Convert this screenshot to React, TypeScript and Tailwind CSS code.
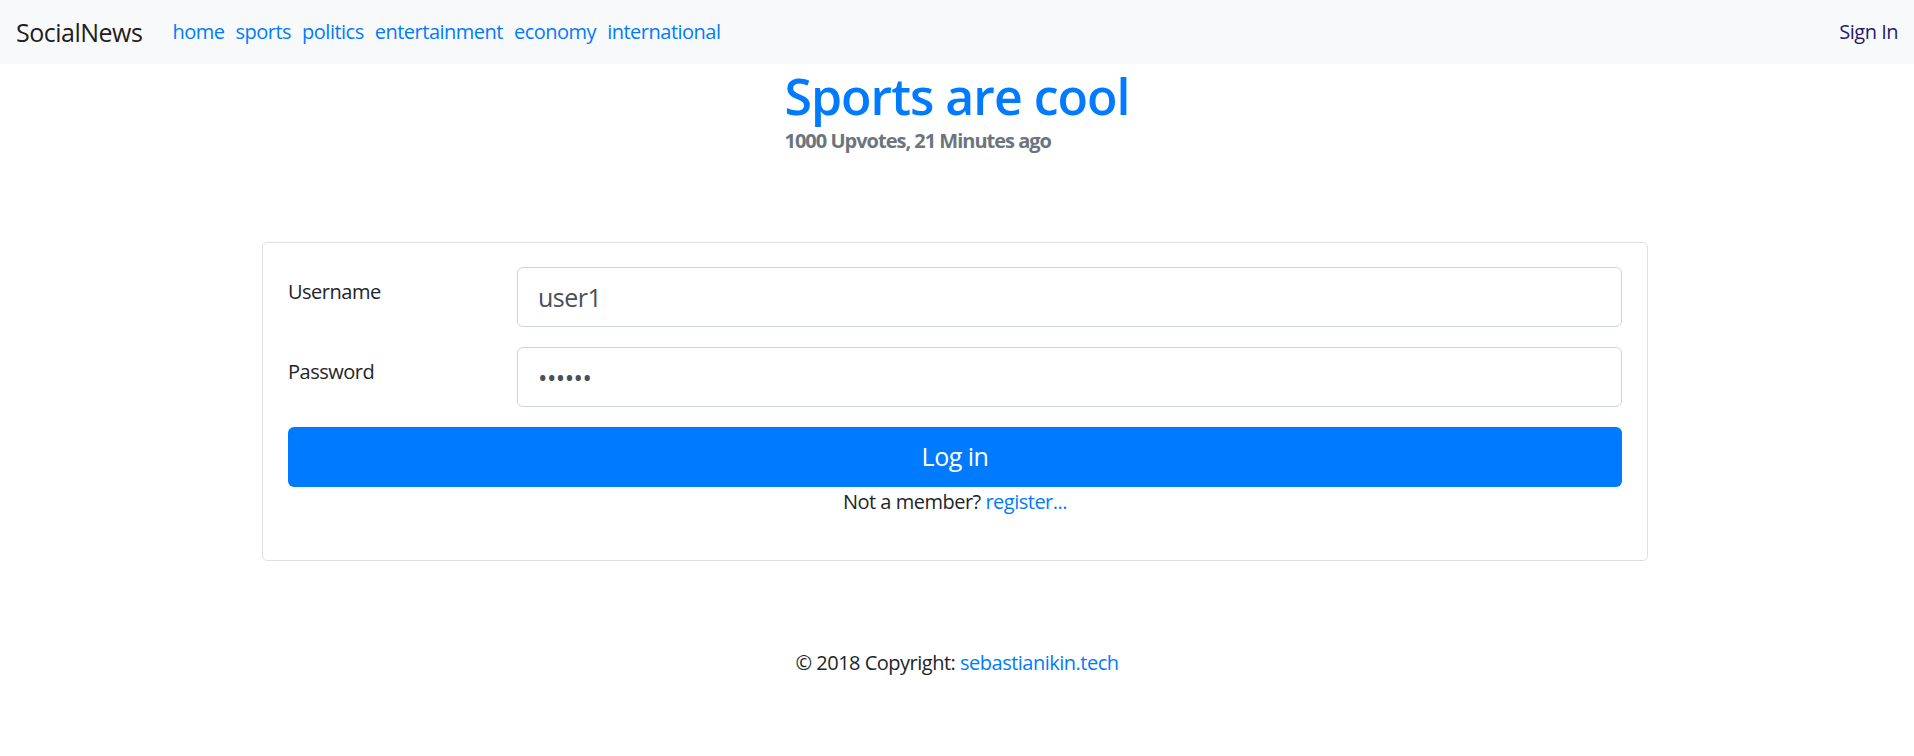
import React from "react";

const links = ["home", "sports", "politics", "entertainment", "economy", "international"];

export default function App() {
  return (
    <div className="min-h-[756px] bg-white text-[20px] leading-[1.5] tracking-[-0.025em] text-[#212529] font-['Open_Sans',sans-serif]">
      {/* Navbar */}
      <nav className="h-16 bg-[#f8f9fa] flex items-center px-4">
        <a href="#" className="text-[25px] text-black/90 mr-[30px] leading-none">
          SocialNews
        </a>
        <ul className="flex items-center gap-[11px]">
          {links.map((l) => (
            <li key={l}>
              <a href="#" className="text-[#007bff]">
                {l}
              </a>
            </li>
          ))}
        </ul>
        <a href="#" className="ml-auto text-[#261c6b]">
          Sign In
        </a>
      </nav>

      {/* Post header */}
      <div className="mx-auto w-fit mt-[2px]">
        <h1 className="text-[50px] leading-[1.2] font-semibold tracking-[-0.02em] text-[#007bff]">Sports are cool</h1>
        <p className="font-bold tracking-[-0.05em] text-[#6c757d]">1000 Upvotes, 21 Minutes ago</p>
      </div>

      {/* Login card */}
      <div className="mx-auto mt-[86px] w-[1386px] -translate-x-[2px] border border-[#dfdfdf] rounded-[5px] px-[25px] pt-6 pb-6">
        <div className="flex flex-col gap-5">
          <div className="flex">
            <label className="w-[229px] pt-[10px]">Username</label>
            <input
              readOnly
              defaultValue="user1"
              className="flex-1 h-[60px] border border-[#ced4da] rounded-[6px] px-5 text-[25px] text-[#495057] outline-none"
            />
          </div>
          <div className="flex">
            <label className="w-[229px] pt-[10px]">Password</label>
            <input
              type="password"
              readOnly
              defaultValue="secret"
              className="flex-1 h-[60px] border border-[#ced4da] rounded-[6px] px-5 text-[25px] text-[#495057] outline-none"
            />
          </div>
          <button className="h-[60px] w-full rounded-[6px] bg-[#007bff] text-white text-[25px]">
            Log in
          </button>
        </div>
        <p className="text-center mb-[19px]">
          Not a member?{" "}
          <a href="#" className="text-[#007bff]">
            register...
          </a>
        </p>
      </div>

      {/* Footer */}
      <footer className="mt-[87px] text-center">
        © 2018 Copyright:{" "}
        <a href="#" className="text-[#007bff]">
          sebastianikin.tech
        </a>
      </footer>
    </div>
  );
}
